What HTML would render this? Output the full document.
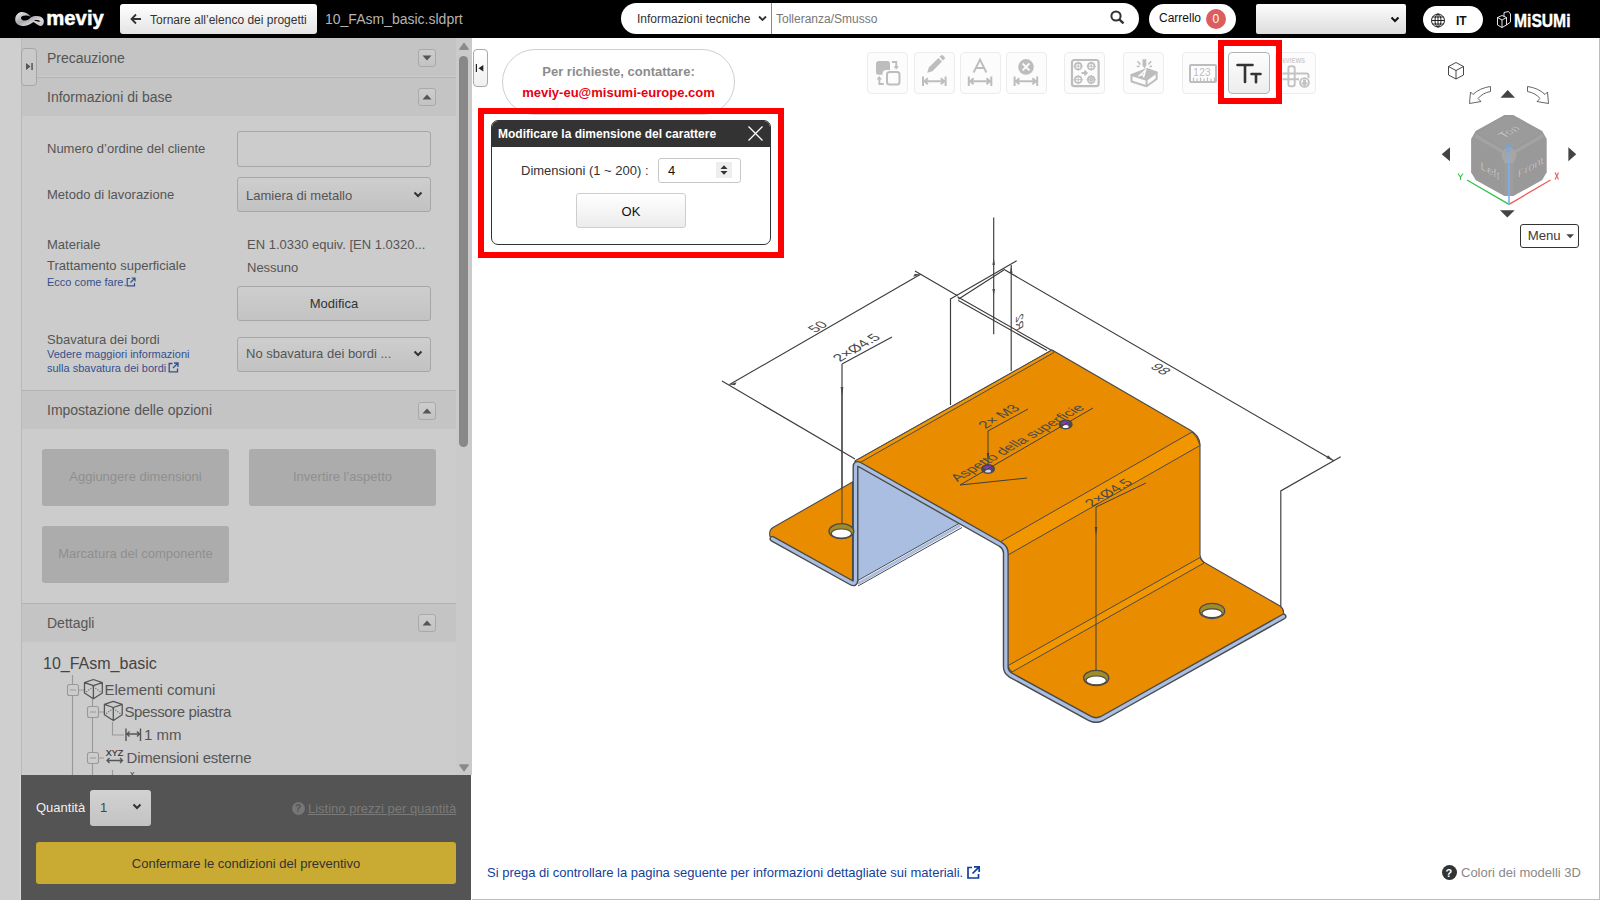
<!DOCTYPE html>
<html><head><meta charset="utf-8">
<style>
*{box-sizing:border-box;margin:0;padding:0}
html,body{width:1600px;height:900px;overflow:hidden;background:#fff;font-family:"Liberation Sans",sans-serif;position:relative}
.a{position:absolute}
.t{position:absolute;white-space:nowrap;line-height:1}
#hdr{left:0;top:0;width:1600px;height:38px;background:#000}
.pill{background:#fff;border-radius:16px}
.ph{position:absolute;left:22px;width:434px;height:38px;background:#c4c4c4}
.sep{position:absolute;left:22px;width:434px;height:1px;background:#b2b2b2}
.lbl{font-size:13px;color:#555}
.hd{font-size:14px;color:#555}
.tg{position:absolute;left:418px;width:18px;height:18px;border:1px solid #a9a9a9;border-radius:3px;background:linear-gradient(#cdcdcd,#c3c3c3)}
.inp{position:absolute;left:237px;width:194px;border:1px solid #a6a6a6;border-radius:3px;background:#cccccc}
.sel{position:absolute;left:237px;width:194px;border:1px solid #a6a6a6;border-radius:3px;background:linear-gradient(#cecece,#c2c2c2)}
.lnk{font-size:11px;color:#34508c}
.dbtn{position:absolute;background:#acacac;border-radius:3px;color:#8f8f8f;font-size:13px;text-align:center;line-height:56px;width:187px;height:57px}
.tb{position:absolute;top:52px;width:41px;height:42px;border:1px solid #ececec;border-radius:4px;background:#fcfcfc}
svg{position:absolute;overflow:visible}
</style></head><body>
<!-- HEADER -->
<div id="hdr" class="a"></div>
<svg style="left:0;top:0" width="110" height="38" viewBox="0 0 110 38">
 <defs><linearGradient id="lg1" x1="0" y1="0" x2="1" y2="1"><stop offset="0" stop-color="#f0f0f0"/><stop offset=".45" stop-color="#a8a6aa"/><stop offset=".7" stop-color="#d8d6da"/><stop offset="1" stop-color="#c8c6ca"/></linearGradient></defs>
 <path fill-rule="evenodd" fill="url(#lg1)" d="M15.2 19.5C15.2 14.5 19 12 22 12C26 12 29 14.5 31 17.2C33 16 35 15.8 37.5 16C41.5 16.3 44 18.5 43.9 21.5C43.8 24.5 42 26 40.5 26C38.5 26 36 23.5 33.5 22C31 23.5 28 26 24 26C18.5 26 15.2 23.5 15.2 19.5Z M21 18C21 16 23.5 15.4 26.5 15.4C29 15.4 30.5 16.5 31 17.3C29.5 19 27.5 20.6 25 20.6C22.5 20.6 21 19.5 21 18Z M34 20.2C36 19.8 39 19.8 40.5 21.2C39.5 22 37 21.8 34 20.2Z"/>
 <text x="46.3" y="24.5" font-family="Liberation Sans" font-weight="bold" font-size="20.3" fill="#fff" stroke="#fff" stroke-width="0.5">meviy</text>
</svg>
<div class="a" style="left:120px;top:4px;width:197px;height:30px;border-radius:3px;background:linear-gradient(#fff,#e4e4e4)"></div>
<svg style="left:130px;top:13px" width="12" height="12" viewBox="0 0 12 12"><path d="M11 6H2M6 1.5L1.5 6 6 10.5" stroke="#333" stroke-width="1.8" fill="none"/></svg>
<div class="t" style="left:150px;top:14px;font-size:12px;color:#333">Tornare all’elenco dei progetti</div>
<div class="t" style="left:325px;top:12px;font-size:14px;color:#b4b4b4">10_FAsm_basic.sldprt</div>

<div class="a pill" style="left:621px;top:3px;width:518px;height:31px;border-radius:16px"></div>
<div class="t" style="left:637px;top:12.6px;font-size:12px;color:#333">Informazioni tecniche</div>
<svg style="left:758px;top:15px" width="9" height="7" viewBox="0 0 9 7"><path d="M1 1.5L4.5 5 8 1.5" stroke="#333" stroke-width="1.8" fill="none"/></svg>
<div class="a" style="left:771px;top:3px;width:1px;height:31px;background:#8a8a8a"></div>
<div class="t" style="left:776px;top:12.6px;font-size:12px;color:#777">Tolleranza/Smusso</div>
<svg style="left:1110px;top:10px" width="16" height="15" viewBox="0 0 16 15"><circle cx="6" cy="6" r="4.6" stroke="#333" stroke-width="2" fill="none"/><path d="M9.3 9.3L13.5 13.3" stroke="#333" stroke-width="2.4"/></svg>

<div class="a pill" style="left:1149px;top:4px;width:87px;height:30px;border-radius:15px"></div>
<div class="t" style="left:1159px;top:11.7px;font-size:12px;color:#111">Carrello</div>
<div class="a" style="left:1206px;top:9px;width:20px;height:20px;border-radius:10px;background:#dc5d5d"></div>
<div class="t" style="left:1212.5px;top:12.5px;font-size:12px;color:#fff">0</div>

<div class="a" style="left:1256px;top:4px;width:150px;height:30px;border-radius:2px;background:linear-gradient(#fdfdfd,#dcdcdc)"></div>
<svg style="left:1390px;top:16px" width="10" height="7" viewBox="0 0 10 7"><path d="M1.5 1.5L5 5 8.5 1.5" stroke="#111" stroke-width="2" fill="none"/></svg>

<div class="a pill" style="left:1423px;top:6px;width:60px;height:27px;border-radius:14px"></div>
<svg style="left:1430px;top:13px" width="16" height="15" viewBox="0 0 16 15"><g stroke="#222" stroke-width="1" fill="none"><circle cx="8" cy="7.5" r="6.5"/><ellipse cx="8" cy="7.5" rx="3" ry="6.5"/><path d="M8 1v13M1.5 7.5h13M2.5 4h11M2.5 11h11"/></g></svg>
<div class="t" style="left:1456px;top:14.6px;font-size:12px;font-weight:bold;color:#111">IT</div>
<svg style="left:1496px;top:10px" width="80" height="20" viewBox="0 0 80 20"><g stroke="#fff" stroke-width="0.9" fill="none"><path d="M1.5 7.5L6 5.5 10.5 7.5 10.5 15 6 17.5 1.5 15Z M6 10v7.5 M1.5 7.5L6 10 10.5 7.5 M8 6.5V2.5L12.5 1.5 14.5 4V12L10.5 15"/></g>
<text x="0" y="0" font-family="Liberation Sans" font-weight="bold" font-size="18" fill="#fff" stroke="#fff" stroke-width="0.4" transform="translate(18 16.5) scale(0.87 1)">MiSUMi</text></svg>

<!-- LEFT PANEL -->
<div class="a" style="left:0;top:38px;width:21px;height:862px;background:#cfcfcf"></div>
<div class="a" style="left:21px;top:38px;width:1px;height:737px;background:#b9b9b9"></div>
<div class="a" style="left:22px;top:38px;width:434px;height:737px;background:#cccccc"></div>
<!-- scrollbar -->
<div class="a" style="left:456px;top:38px;width:16px;height:737px;background:#cacaca"></div>
<svg style="left:458px;top:42px" width="12" height="9" viewBox="0 0 12 9"><path d="M6 1.6L10 7.2H2Z" fill="#8a8a8a" stroke="#8a8a8a" stroke-width="1.6" stroke-linejoin="round"/></svg>
<div class="a" style="left:459px;top:56px;width:9px;height:391px;border-radius:5px;background:#888"></div>
<svg style="left:458px;top:763px" width="12" height="9" viewBox="0 0 12 9"><path d="M6 7.6L10 2H2Z" fill="#8a8a8a" stroke="#8a8a8a" stroke-width="1.6" stroke-linejoin="round"/></svg>


<div class="ph" style="top:38px"></div>
<div class="t hd" style="left:47px;top:50.8px">Precauzione</div>
<div class="tg" style="top:49px"></div>
<svg style="left:422px;top:55px" width="10" height="6" viewBox="0 0 10 6"><path d="M0.5 0.5H9.5L5 5.5Z" fill="#555"/></svg>
<div class="sep" style="top:77px"></div>
<div class="ph" style="top:78px"></div>
<div class="t hd" style="left:47px;top:90.4px">Informazioni di base</div>
<div class="tg" style="top:88px"></div>
<svg style="left:422px;top:94px" width="10" height="6" viewBox="0 0 10 6"><path d="M0.5 5.5H9.5L5 0.5Z" fill="#555"/></svg>
<!-- toggle side -->
<div class="a" style="left:21px;top:48px;width:15.5px;height:37.5px;border:1px solid #a6a6a6;border-radius:4px;background:#c9c9c9"></div>
<svg style="left:25px;top:62px" width="9" height="9" viewBox="0 0 9 9"><path d="M1 1L5.5 4.5 1 8Z" fill="#555"/><rect x="6.3" y="1" width="1.5" height="7" fill="#555"/></svg>

<div class="t lbl" style="left:47px;top:141.6px">Numero d’ordine del cliente</div>
<div class="inp" style="top:131px;height:36px"></div>
<div class="t lbl" style="left:47px;top:187.5px">Metodo di lavorazione</div>
<div class="sel" style="top:177px;height:35px"></div>
<div class="t lbl" style="left:246px;top:188.5px;color:#555">Lamiera di metallo</div>
<svg style="left:413px;top:191px" width="10" height="7" viewBox="0 0 10 7"><path d="M1.5 1.5L5 5 8.5 1.5" stroke="#333" stroke-width="2" fill="none"/></svg>
<div class="t lbl" style="left:47px;top:238px">Materiale</div>
<div class="t lbl" style="left:247px;top:238px">EN 1.0330 equiv. [EN 1.0320...</div>
<div class="t lbl" style="left:47px;top:259.3px">Trattamento superficiale</div>
<div class="t lbl" style="left:247px;top:260.6px">Nessuno</div>
<div class="t lnk" style="left:47px;top:277px">Ecco come fare.</div>
<svg style="left:126px;top:277px" width="10" height="10" viewBox="0 0 10 10"><path d="M4 1.5H1.2V8.8H8.5V6M5.5 1H9V4.5M9 1L4.5 5.5" stroke="#34508c" stroke-width="1.2" fill="none"/></svg>
<div class="sel" style="top:285.5px;height:35px;background:linear-gradient(#cecece,#c3c3c3)"></div>
<div class="t lbl" style="left:237px;width:194px;text-align:center;top:296.6px;color:#333">Modifica</div>
<div class="t lbl" style="left:47px;top:332.8px">Sbavatura dei bordi</div>
<div class="t lnk" style="left:47px;top:349px">Vedere maggiori informazioni</div>
<div class="t lnk" style="left:47px;top:362.9px">sulla sbavatura dei bordi</div>
<svg style="left:168px;top:362px" width="11" height="11" viewBox="0 0 11 11"><path d="M4.5 1.5H1.2V9.8H9.5V6.5M6 1H10V5M10 1L5 6" stroke="#34508c" stroke-width="1.3" fill="none"/></svg>
<div class="sel" style="top:336.5px;height:35px"></div>
<div class="t lbl" style="left:246px;top:347px">No sbavatura dei bordi ...</div>
<svg style="left:413px;top:350px" width="10" height="7" viewBox="0 0 10 7"><path d="M1.5 1.5L5 5 8.5 1.5" stroke="#333" stroke-width="2" fill="none"/></svg>

<div class="sep" style="top:390px"></div>
<div class="ph" style="top:391px"></div>
<div class="t hd" style="left:47px;top:402.5px">Impostazione delle opzioni</div>
<div class="tg" style="top:401.5px"></div>
<svg style="left:422px;top:407.5px" width="10" height="6" viewBox="0 0 10 6"><path d="M0.5 5.5H9.5L5 0.5Z" fill="#555"/></svg>
<div class="dbtn" style="left:42px;top:449px">Aggiungere dimensioni</div>
<div class="dbtn" style="left:249px;top:449px">Invertire l’aspetto</div>
<div class="dbtn" style="left:42px;top:526px">Marcatura del componente</div>

<div class="sep" style="top:603px"></div>
<div class="ph" style="top:604px"></div>
<div class="t hd" style="left:47px;top:616px">Dettagli</div>
<div class="tg" style="top:614px"></div>
<svg style="left:422px;top:620px" width="10" height="6" viewBox="0 0 10 6"><path d="M0.5 5.5H9.5L5 0.5Z" fill="#555"/></svg>

<div class="t" style="left:43px;top:655.8px;font-size:16px;color:#444">10_FAsm_basic</div>
<!-- TREE -->
<svg style="left:0;top:0" width="480" height="775" viewBox="0 0 480 775">
 <g stroke="#999" stroke-width="1.1" fill="none">
  <path d="M72.5 675V775M92.5 699V775M112.5 722V735H124M112.5 770V775"/>
  <rect x="67.5" y="684.5" width="11" height="11" rx="2" fill="#cccccc"/>
  <path d="M70 690h6M78.5 690H84"/>
  <rect x="87.5" y="706.5" width="11" height="11" rx="2" fill="#cccccc"/>
  <path d="M90 712h6M98.5 712H104"/>
  <rect x="87.5" y="752.5" width="11" height="11" rx="2" fill="#cccccc"/>
  <path d="M90 758h6M98.5 758H104"/>
 </g>
 <g stroke="#555" stroke-width="1.3" fill="none">
  <path d="M93.4 679.5L102.3 682.6V693L93.4 698.7 84.5 693V682.6Z M84.5 682.6L93.4 685.7 102.3 682.6M93.4 685.7V698.7" stroke-linejoin="round"/><path d="M93.4 686.5L85.8 692.3M93.4 686.5L101 692.3" stroke-dasharray="1 1.6" stroke-width="1.1"/>
  <g transform="translate(19.9 21.8)"><path d="M93.4 679.5L102.3 682.6V693L93.4 698.7 84.5 693V682.6Z M84.5 682.6L93.4 685.7 102.3 682.6M93.4 685.7V698.7" stroke-linejoin="round"/><path d="M93.4 686.5L85.8 692.3M93.4 686.5L101 692.3" stroke-dasharray="1 1.6" stroke-width="1.1"/></g>
  <path d="M126 728.5V741M140.5 728.5V741M127 734H139.5M129.5 731.5L127 734 129.5 736.5M137 731.5L139.5 734 137 736.5" stroke-width="1.4"/>
  <path d="M107 760.5H122.5M109.5 758L107 760.5 109.5 763M120 758L122.5 760.5 120 763" stroke-width="1.3"/>
 </g>
 <text x="105.8" y="755.5" font-family="Liberation Sans" font-size="9" fill="#333" stroke="#333" stroke-width="0.2">XYZ</text>
 <text x="130" y="777" font-family="Liberation Sans" font-size="9" fill="#444">x</text>
</svg>
<div class="t" style="left:104.5px;top:682.3px;font-size:15px;color:#555">Elementi comuni</div>
<div class="t" style="left:124.5px;top:704px;font-size:15px;color:#555;letter-spacing:-0.38px">Spessore piastra</div>
<div class="t" style="left:144px;top:726.9px;font-size:15px;color:#555">1 mm</div>
<div class="t" style="left:126.5px;top:749.6px;font-size:15px;color:#555;letter-spacing:-0.2px">Dimensioni esterne</div>

<!-- BOTTOM -->
<div class="a" style="left:21px;top:775px;width:450px;height:125px;background:#545454"></div>
<div class="a" style="left:20px;top:775px;width:1px;height:125px;background:#dadada"></div>
<div class="t" style="left:36px;top:800.7px;font-size:13px;color:#f0f0f0">Quantità</div>
<div class="a" style="left:90px;top:790px;width:61px;height:36px;border-radius:3px;background:linear-gradient(#d2d2d2,#c3c3c3)"></div>
<div class="t" style="left:100px;top:800.7px;font-size:13px;color:#444">1</div>
<svg style="left:132px;top:803px" width="10" height="7" viewBox="0 0 10 7"><path d="M1.5 1.5L5 5 8.5 1.5" stroke="#333" stroke-width="2" fill="none"/></svg>
<div class="a" style="left:292.3px;top:802.3px;width:12.4px;height:12.4px;border-radius:7px;background:#767676"></div>
<div class="t" style="left:295px;top:804px;font-size:10px;font-weight:bold;color:#545454">?</div>
<div class="t" style="left:308px;top:801.7px;font-size:13px;color:#7a7a7a;text-decoration:underline">Listino prezzi per quantità</div>
<div class="a" style="left:36px;top:842px;width:420px;height:42px;border-radius:3px;background:#c9aa33"></div>
<div class="t" style="left:36px;width:420px;text-align:center;top:856.7px;font-size:13px;color:#333">Confermare le condizioni del preventivo</div>

<!-- VIEWER -->
<div class="a" style="left:1599px;top:38px;width:1px;height:862px;background:#bdbdbd"></div>
<div class="a" style="left:472px;top:899px;width:1128px;height:1px;background:#bdbdbd"></div>
<div class="a" style="left:472.5px;top:49px;width:15.5px;height:37.5px;border:1px solid #a8a8a8;border-radius:4px;background:linear-gradient(#fff,#f0f0f0)"></div>
<svg style="left:475px;top:63px" width="10" height="10" viewBox="0 0 10 10"><rect x="0.8" y="1" width="1.2" height="8" fill="#222"/><path d="M8.3 2L3.5 5.2 8.3 8.5Z" fill="#222"/></svg>

<div class="a" style="left:502px;top:49px;width:233px;height:66px;border:1px solid #cfcfcf;border-radius:33px;background:#fff"></div>
<div class="t" style="left:502px;width:233px;text-align:center;top:64.7px;font-size:13px;font-weight:bold;color:#8c8c8c">Per richieste, contattare:</div>
<div class="t" style="left:502px;width:233px;text-align:center;top:85.9px;font-size:13px;font-weight:bold;color:#e60012">meviy-eu@misumi-europe.com</div>

<!-- toolbar -->
<div class="tb" style="left:867px"></div>
<div class="tb" style="left:913.5px"></div>
<div class="tb" style="left:959.5px"></div>
<div class="tb" style="left:1005.5px"></div>
<div class="tb" style="left:1064px"></div>
<div class="tb" style="left:1123px"></div>
<div class="tb" style="left:1182px"></div>
<div class="tb" style="left:1275px"></div>
<div class="a" style="left:1228px;top:52px;width:42px;height:42px;border:1px solid #b4b4b4;border-radius:4px;background:linear-gradient(#fdfdfd,#ededed)"></div>
<svg style="left:860px;top:45px" width="470" height="60" viewBox="860 45 470 60">
 <g fill="#bdbdbd">
  <path d="M878.5 61h9a2.5 2.5 0 0 1 2.5 2.5v6.5h-3.5a4 4 0 0 0-4 4v0.8h-4a2.5 2.5 0 0 1-2.5-2.5v-8.8a2.5 2.5 0 0 1 2.5-2.5z"/>
  <path d="M893.5 66.2h5.5l-2.75 3.3z M876.5 79.4h5.5l-2.75-3.3z"/>
 </g>
 <g stroke="#bdbdbd" fill="none">
  <rect x="887" y="72" width="12.5" height="12.5" rx="2.5" stroke-width="2"/>
  <path d="M891.9 62h4.35v5M883.75 84h-4.35v-5" stroke-width="1.9"/>
  <path d="M923 76.5V86M945.6 76.5V86M924 81.25H944.6M927.8 78.3L924.5 81.25 927.8 84.2M940.8 78.3L944.1 81.25 940.8 84.2" stroke-width="2"/>
  <path d="M968.8 76.5V86M991.3 76.5V86M969.8 81.25H990.3M973.6 78.3L970.3 81.25 973.6 84.2M986.5 78.3L989.8 81.25 986.5 84.2" stroke-width="2"/>
  <path d="M1014.6 76.5V86M1037.2 76.5V86M1015.6 81.25H1036.2M1019.4 78.3L1016.1 81.25 1019.4 84.2M1032.4 78.3L1035.7 81.25 1032.4 84.2" stroke-width="2"/>
  <path d="M973.6 72.5L980 59.6 986.4 72.5M975.8 68h8.4" stroke-width="1.9"/>
 </g>
 <g fill="#bdbdbd">
  <path d="M927.2 72.8l1.6-5.2 9.6-9.6 3.6 3.6-9.6 9.6z M939.5 56.8l1.4-1.4a1.5 1.5 0 0 1 2.1 0l1.5 1.5a1.5 1.5 0 0 1 0 2.1l-1.4 1.4z"/>
  <circle cx="1026" cy="66.9" r="7.8"/>
 </g>
 <path d="M1022.6 63.5l6.8 6.8M1029.4 63.5l-6.8 6.8" stroke="#fcfcfc" stroke-width="1.8"/>
 <!-- icon5 -->
 <g stroke="#bdbdbd" fill="none" stroke-width="1.6">
  <rect x="1072" y="60" width="26.6" height="26.2" rx="2.5" stroke-width="2.2"/>
  <circle cx="1078.2" cy="66.2" r="3.3"/><circle cx="1091.2" cy="66.2" r="3.3"/><circle cx="1078.2" cy="79.7" r="3.3"/><circle cx="1091.2" cy="79.7" r="3.3"/><circle cx="1091.2" cy="79.7" r="1.3"/>
  <path d="M1078.2 61.5v9.4M1073.5 66.2h9.4M1091.2 61.5v9.4M1086.5 66.2h9.4M1078.2 75v9.4M1073.5 79.7h9.4M1091.2 75v2.8M1091.2 81.6v2.8M1086.5 79.7h2.8M1093.1 79.7h2.8" stroke-width="0.9"/>
  <path d="M1081.5 73h5M1084.4 70.6l2.4 2.4-2.4 2.4" stroke-width="1.8"/>
 </g>
 <!-- icon6 -->
 <path d="M1131.5 75L1147.1 68.9 1156.6 72.5 1146.6 79.7Z" fill="#bdbdbd" stroke="#bdbdbd" stroke-width="2" stroke-linejoin="round"/>
 <path d="M1131.5 75L1146.6 79.7V86.3L1131.5 81.5Z M1146.6 79.7L1156.6 72.5V79L1146.6 86.3Z" fill="#fcfcfc" stroke="#bdbdbd" stroke-width="2" stroke-linejoin="round"/>
 <path d="M1138.5 76.5L1145.5 70.2 1143.5 77.5M1140.3 75h4.2" stroke="#fcfcfc" stroke-width="1.4" fill="none"/>
 <path d="M1142.5 59.2h3.8v6.1l-1.9 3.1-1.9-3.1z" fill="#bdbdbd"/>
 <path d="M1137.4 61.2l3 3.4M1151.2 61.2l-2.9 3.4M1136.8 66.4l2.8-.2M1149.6 66.2l2.4.2" stroke="#bdbdbd" stroke-width="1.5"/>
 <!-- icon7 -->
 <g stroke="#bdbdbd" fill="none">
  <rect x="1190" y="65" width="26" height="17" rx="1" stroke-width="2"/>
  <path d="M1193.5 81v-3.5M1197 81v-2.5M1200.5 81v-3.5M1204 81v-2.5M1207.5 81v-3.5M1211 81v-2.5M1214.5 81v-3.5" stroke-width="1.2"/>
 </g>
 <text x="1193.2" y="76.2" font-family="Liberation Sans" font-size="10" fill="#bdbdbd" letter-spacing="0.4">123</text>
 <!-- icon8 Tt -->
 <path d="M1237.5 65h15M1245 65v17M1251.5 74h9M1256 74v8.2" stroke="#333" stroke-width="2.6" stroke-linecap="round" fill="none"/>
 <!-- icon9 6views -->
 <text x="0" y="0" font-family="Liberation Sans" font-size="7" font-weight="bold" fill="#cfcfcf" transform="translate(1282.5 62.8) scale(0.85 1)">6VIEWS</text>
 <g stroke="#c2c2c2" fill="none" stroke-width="1.9">
  <rect x="1288.4" y="66.3" width="6.3" height="20" rx="2"/>
  <path d="M1282.5 73.5H1306.5Q1308.6 73.5 1308.6 75.6V78M1282.5 79.2H1299"/>
  <circle cx="1304.5" cy="82.5" r="4.4"/>
 </g>
 <path d="M1303 79.5h3v3h2.3l-3.8 4-3.8-4h2.3z" fill="#c2c2c2"/>
</svg>
<!-- red box around Tt -->
<div class="a" style="left:1218px;top:40px;width:64px;height:64px;border:6px solid #ff0000"></div>

<!-- nav cube -->
<svg style="left:1430px;top:55px" width="170" height="200" viewBox="1430 55 170 200">
 <path d="M1456 62.5L1463.5 66.5V75L1456 79L1448.5 75V66.5Z M1448.5 66.5L1456 70.5 1463.5 66.5 M1456 70.5V79" stroke="#333" stroke-width="0.9" fill="none"/>
 <path d="M1490.5 86.5V91.5C1485 92.5 1481 95 1478 98.5L1481 101.5 1469.5 103.5 1470.5 92 1473 94.5C1477.5 90 1483.5 87.5 1490.5 86.5Z" stroke="#555" stroke-width="0.9" fill="#fff"/>
 <path d="M1527.5 86.5V91.5C1533 92.5 1537 95 1540 98.5L1537 101.5 1548.5 103.5 1547.5 92 1545 94.5C1540.5 90 1534.5 87.5 1527.5 86.5Z" stroke="#555" stroke-width="0.9" fill="#fff"/>
 <path d="M1500.5 97.8L1507.7 90 1515 97.8Z" fill="#444"/>
 <path d="M1441.7 154.3L1450 147.3V161.3Z" fill="#444"/>
 <path d="M1576.2 154.3L1568.4 147.3V161.3Z" fill="#444"/>
 <path d="M1500 210.3H1514.7L1507.3 217.6Z" fill="#444"/>
 <!-- cube -->
 <path d="M1504.4 115H1513.3L1542.2 131.1 1546.7 138.9V172.2L1542.2 180 1513.3 196.1H1504.4L1475.6 180 1471.1 172.2V138.9L1475.6 131.1Z" fill="#999"/>
 <path d="M1504.4 117.5H1513.3L1541 133 1509 151 1477 133Z" fill="#9b9b9b"/>
 <path d="M1475 135.5L1504 152.5M1543 135.5L1514 152.5" stroke="#a3a3a3" stroke-width="3.2"/>
 <path d="M1504.5 162H1513.5V195.5H1504.5Z" fill="#9d9d9d"/>
 <path d="M1503 150.5L1509 147 1515 150.5 1516.5 156 1513.5 163H1504.5L1501.5 156Z" fill="#a6a6a6"/>
 <g font-family="Liberation Sans" fill="#d8d8d8" stroke="#777" stroke-width="0.25">
  <text font-size="12" transform="translate(1504.4 138.5) matrix(0.866 -0.5 0.866 0.5 0 0)">Top</text>
  <text font-size="11.5" transform="translate(1480.5 169) matrix(1 0.577 0 1 0 0)">Left</text>
  <text font-size="11" transform="translate(1518 178) matrix(1 -0.577 0 1 0 0)">Front</text>
 </g>
 <path d="M1509 204.4L1467 180" stroke="#33c24a" stroke-width="1.3"/>
 <path d="M1509 204.4L1550.5 180" stroke="#f05a5a" stroke-width="1.3"/>
 <path d="M1509 204.4V155.6" stroke="#7ab0f2" stroke-width="1.6"/>
 <path d="M1505.5 146.5L1510.5 144.5 1506 152 1511 150" stroke="#6aa8f0" stroke-width="1.2" fill="none"/>
 <path d="M1458 173.5l2.5 3.5 2.5-3.5M1460.5 177v3" stroke="#33c24a" stroke-width="1.1" fill="none"/>
 <path d="M1555 172.5l3.5 7M1558.5 172.5l-3.5 7" stroke="#f05a5a" stroke-width="1.1" fill="none"/>
</svg>
<div class="a" style="left:1520px;top:224px;width:59px;height:24px;border:1px solid #333;border-radius:3px;background:#fff"></div>
<div class="t" style="left:1527.7px;top:229px;font-size:13.2px;color:#3a3a3a">Menu</div>
<svg style="left:1566px;top:234px" width="9" height="5" viewBox="0 0 9 5"><path d="M0.3 0.3H8L4.15 4.3Z" fill="#444"/></svg>

<!-- bottom texts -->
<div class="t" style="left:487px;top:866.2px;font-size:13px;color:#123f9c">Si prega di controllare la pagina seguente per informazioni dettagliate sui materiali.</div>
<svg style="left:966px;top:865px" width="15" height="15" viewBox="0 0 15 15"><path d="M6 2.5H2V13H12.5V9M8 1.8H13.2V7M13.2 1.8L6.5 8.5" stroke="#123f9c" stroke-width="1.7" fill="none"/></svg>
<div class="a" style="left:1442px;top:865px;width:15px;height:15px;border-radius:8px;background:#333"></div>
<div class="t" style="left:1445.5px;top:867.5px;font-size:11px;font-weight:bold;color:#fff">?</div>
<div class="t" style="left:1461px;top:865.9px;font-size:13px;color:#888">Colori dei modelli 3D</div>
<!-- 3D MODEL -->
<svg style="left:0;top:0;pointer-events:none" width="1600" height="900" viewBox="0 0 1600 900">
 <g stroke="#3c3c3c" stroke-width="1.15" fill="none">
  <!-- dimension 50 -->
  <path d="M729.6 384.5L920.2 274.6M722 381L855 459M915 271L957.5 295.8"/>
  <path d="M950.5 299V405M993.7 217.5V334.2M1011.2 265V371"/>
  <path d="M950 299.2L1016.7 260.8M958.3 299.2L1005 269.2M957.5 296.7L1051 350M958.3 300.5L1047 350.5"/>
  <path d="M1005 270L1333.4 460.4M1340.7 456.7L1280.8 490.9V609"/>
  <path d="M842 364L892 337M842 364V524"/>
 </g>
 <g fill="#4a4a4a">
  <path d="M729.6 384.5l7-2.2-1.6 3z M920.2 274.6l-7 2.2 1.6-3z"/>
  <path d="M842 395l-1.4-8h2.8z"/>
  <path d="M993.7 258l-1.3 7h2.6z M993.7 296l-1.3-7h2.6z M1011.2 266l-1.3 7h2.6z"/>
  <path d="M1333.4 460.4l-7-2.2 1.6-3z"/>
 </g>

 <!-- left wall inner face -->
 <path d="M857 466L959 523.5 857 581Z" fill="#a9bee0"/>
 <path d="M857 581L959 523.5M858 586L962 527.5" stroke="#4a4a4a" stroke-width="1" fill="none"/>
 <path d="M858 583.5L960 525.5" stroke="#a9bee0" stroke-width="3" fill="none"/>
 <!-- left flange top -->
 <path d="M852.5 482L773 527.5Q768.5 530.5 770 536.5L852.5 581Z" fill="#ea8c00" stroke="#4a4a4a" stroke-width="1.1"/>
 <circle cx="0" cy="0" r="0"/>
 <!-- main orange body -->
 <path d="M855 461L1052 350 1190 430Q1199 435 1200 444V555Q1201 561 1207 564L1280 606Q1284 609 1283.5 613V619L1100 721Q1096 723 1091 721L1011 677Q1005 673 1003.5 667V553Q1003 548 999 545L858 466Z" fill="#ea8c00" stroke="#4a4a4a" stroke-width="1.1"/>
 <!-- bend bands -->
 <path d="M1001 541.5L1192 432Q1198 437 1200 445.5L1008 555Q1006 547 1001 541.5Z" fill="#f29600" stroke="#4a4a4a" stroke-width="1"/>
 <path d="M1008 665.6L1200 557.5Q1201 561 1204 563L1012 672Q1009 669 1008 665.6Z" fill="#f29600" stroke="#4a4a4a" stroke-width="1"/>
 <path d="M855 461L1052 350 1054 352.5 857.5 464Z" fill="#f29600" stroke="#4a4a4a" stroke-width="1"/>
 <!-- front edge strips -->
 <path d="M772.5 538.8L851 582.5Q855.5 585 855.5 580V467Q855.5 462.5 859.5 464.5L1000 544Q1005.8 547.5 1005.8 553V667Q1005.8 672 1010.5 675L1090 718.5Q1096 721.5 1102 718.5L1283.5 616.5" stroke="#4a4a4a" stroke-width="6" fill="none" stroke-linejoin="round" stroke-linecap="round"/>
 <path d="M772.5 538.8L851 582.5Q855.5 585 855.5 580V467Q855.5 462.5 859.5 464.5L1000 544Q1005.8 547.5 1005.8 553V667Q1005.8 672 1010.5 675L1090 718.5Q1096 721.5 1102 718.5L1283.5 616.5" stroke="#a9bee0" stroke-width="3.2" fill="none" stroke-linejoin="round" stroke-linecap="round"/>
 <!-- holes -->
 <g stroke="#4a4a4a" stroke-width="1.3">
  <ellipse cx="841.4" cy="531.2" rx="12.4" ry="7.5" fill="#a08c26"/>
  <ellipse cx="1212.1" cy="610.9" rx="12.6" ry="7.6" fill="#a08c26"/>
  <ellipse cx="1096.2" cy="678" rx="12.6" ry="7.6" fill="#a08c26"/>
 </g>
 <g fill="#fff" stroke="#4a4a4a" stroke-width="1.2">
  <ellipse cx="841.4" cy="533.5" rx="10.1" ry="4.5"/>
  <ellipse cx="1212.1" cy="613.3" rx="10.2" ry="4.4"/>
  <ellipse cx="1096.2" cy="680.4" rx="10.2" ry="4.4"/>
 </g>
 <g>
  <ellipse cx="988" cy="469" rx="7" ry="5" fill="#4a4a4a"/>
  <ellipse cx="1065.6" cy="424.4" rx="7" ry="5" fill="#4a4a4a"/>
  <path d="M983 468Q988 464 993 467L989 470Z M1060.6 423.4Q1065.6 419.4 1070.6 422.4L1066.6 425.4Z" fill="#8a3ab8"/>
  <ellipse cx="988" cy="471" rx="3" ry="1.5" fill="#c8d4ee"/>
  <ellipse cx="1065.6" cy="426.4" rx="3" ry="1.5" fill="#fff"/>
 </g>
 <!-- annotations on surfaces -->
 <g stroke="#3f3f3f" stroke-width="1" fill="none">
  <path d="M988 431L1028 409M988 431V466"/>
  <path d="M960 485L1093 408M960 485L1027 478"/>
  <path d="M1096 507L1146 483M1096 507V670"/>
  <path d="M842 390V524"/>
 </g>
 <path d="M988 460l-1.3-7h2.6z M1096 535l-1.3-8h2.6z" fill="#3f3f3f"/>
 <g font-family="Liberation Sans" fill="#4a4a4a">
 <text font-size="14" transform="translate(815 333) matrix(0.866 -0.5 0.866 0.5 0 0)">50</text>
 <text font-size="14.5" transform="translate(840 362) matrix(0.866 -0.5 0.866 0.5 0 0)">2×Ø4.5</text>
 <text font-size="14.5" transform="translate(1149.5 367.5) matrix(0.866 0.5 -0.866 0.5 0 0)">98</text>
 <text font-size="12" transform="translate(1015.5 332) matrix(0 -1 -0.866 0.5 0 0)">R2</text>
 <text font-size="14.3" transform="translate(957.5 482) matrix(0.866 -0.5 0.866 0.5 0 0)">Aspetto della superficie</text>
 <text font-size="14.5" transform="translate(985.5 429) matrix(0.866 -0.5 0.866 0.5 0 0)">2× M3</text>
 <text font-size="14.5" transform="translate(1092 507) matrix(0.866 -0.5 0.866 0.5 0 0)">2×Ø4.5</text>
 </g>
</svg>
<!-- DIALOG -->
<div class="a" style="left:478px;top:108px;width:306px;height:150px;border:6px solid #ff0000"></div>
<div class="a" style="left:491px;top:120px;width:280px;height:125px;border:1px solid #333;border-radius:7px;background:#fff;overflow:hidden">
 <div class="a" style="left:0;top:0;width:280px;height:26px;background:#333"></div>
</div>
<div class="t" style="left:498px;top:127.5px;font-size:12px;font-weight:bold;color:#fff">Modificare la dimensione del carattere</div>
<svg style="left:747px;top:125px" width="17" height="17" viewBox="0 0 17 17"><path d="M1.5 1.5L15.5 15.5M15.5 1.5L1.5 15.5" stroke="#fff" stroke-width="1.3"/></svg>
<div class="t" style="left:521px;top:163.7px;font-size:13px;color:#333">Dimensioni (1 ~ 200) :</div>
<div class="a" style="left:657.5px;top:157.5px;width:83px;height:25px;border:1px solid #c8c8c8;border-radius:3px;background:#fff"></div>
<div class="t" style="left:668px;top:163.7px;font-size:13px;color:#111">4</div>
<div class="a" style="left:716px;top:162px;width:16px;height:16px;background:#eee"></div>
<svg style="left:719px;top:164px" width="10" height="12" viewBox="0 0 10 12"><path d="M1.5 5H8.5L5 1.2Z M1.5 7H8.5L5 10.8Z" fill="#333"/></svg>
<div class="a" style="left:576px;top:193px;width:110px;height:35px;border:1px solid #cdcdcd;border-radius:3px;background:linear-gradient(#fff,#ececec)"></div>
<div class="t" style="left:576px;width:110px;text-align:center;top:204.7px;font-size:13px;color:#111">OK</div>
</body></html>
